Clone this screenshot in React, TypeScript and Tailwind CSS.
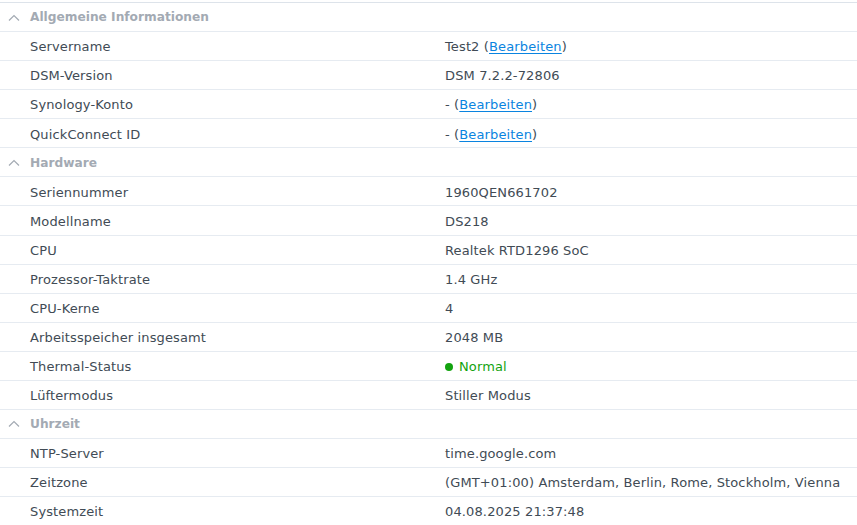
import React from "react";

type Row = { label: string; value: React.ReactNode };

const Edit = () => (
  <a href="#" className="text-[#0a84e0] underline underline-offset-2">Bearbeiten</a>
);

const sections: { title: string; rows: Row[] }[] = [
  {
    title: "Allgemeine Informationen",
    rows: [
      { label: "Servername", value: <>Test2 (<Edit />)</> },
      { label: "DSM-Version", value: "DSM 7.2.2-72806" },
      { label: "Synology-Konto", value: <>- (<Edit />)</> },
      { label: "QuickConnect ID", value: <>- (<Edit />)</> },
    ],
  },
  {
    title: "Hardware",
    rows: [
      { label: "Seriennummer", value: "1960QEN661702" },
      { label: "Modellname", value: "DS218" },
      { label: "CPU", value: "Realtek RTD1296 SoC" },
      { label: "Prozessor-Taktrate", value: "1.4 GHz" },
      { label: "CPU-Kerne", value: "4" },
      { label: "Arbeitsspeicher insgesamt", value: "2048 MB" },
      {
        label: "Thermal-Status",
        value: (
          <span className="flex items-center text-[#13a30f]">
            <span className="mr-[6px] inline-block h-[8px] w-[8px] rounded-full bg-[#13a30f]" />
            Normal
          </span>
        ),
      },
      { label: "Lüftermodus", value: "Stiller Modus" },
    ],
  },
  {
    title: "Uhrzeit",
    rows: [
      { label: "NTP-Server", value: "time.google.com" },
      { label: "Zeitzone", value: "(GMT+01:00) Amsterdam, Berlin, Rome, Stockholm, Vienna" },
      { label: "Systemzeit", value: "04.08.2025 21:37:48" },
    ],
  },
];

const Chevron = () => (
  <svg width="12" height="8" viewBox="0 0 12 8" className="ml-[8px] mr-[10px]">
    <path d="M1 6.5 L6 1.5 L11 6.5" fill="none" stroke="#a3aab3" strokeWidth="1.2" />
  </svg>
);

export default function App() {
  return (
    <div
      className="h-[525px] w-[857px] overflow-hidden bg-white pt-[2px] text-[13px] tracking-[0.13px] text-[#414b55]"
      style={{ fontFamily: '"DejaVu Sans", Verdana, sans-serif' }}
    >
      <div className="border-t border-[#dde3ea]">
        {sections.map((s) => (
          <div key={s.title}>
            <div className="flex h-[29.07px] items-center border-b border-[#e6ebf1] pt-[1px] text-[12.2px] font-bold tracking-normal text-[#a3aab3]">
              <Chevron />
              <span>{s.title}</span>
            </div>
            {s.rows.map((r) => (
              <div key={r.label} className="flex h-[29.07px] items-center border-b border-[#e6ebf1] pt-[2px]">
                <div className="w-[445px] shrink-0 pl-[30px]">{r.label}</div>
                <div className="flex-1">{r.value}</div>
              </div>
            ))}
          </div>
        ))}
      </div>
    </div>
  );
}
